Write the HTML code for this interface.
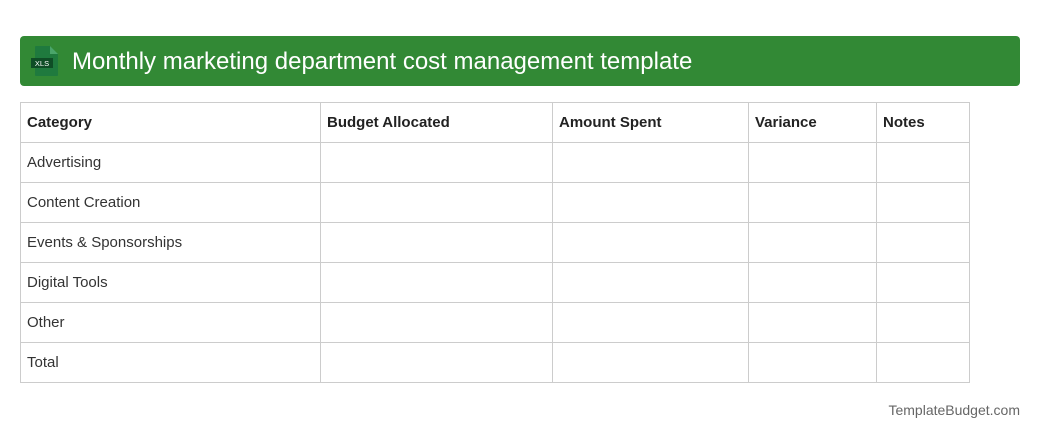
<!DOCTYPE html>
<html><head><style>
body{margin:0;width:1040px;height:440px;background:#fff;font-family:"Liberation Sans",sans-serif;position:relative;overflow:hidden}
.hdr{position:absolute;left:20px;top:36px;width:1000px;height:50px;background:#328935;border-radius:4px}
.hdr h1{position:absolute;left:52px;top:0;margin:0;line-height:51px;font-size:24px;font-weight:normal;color:#fff}
table{position:absolute;left:20px;top:102px;border-collapse:collapse;font-size:15px;color:#333}
td{border:1px solid #ccc;height:39px;padding:0 0 0 6px;vertical-align:middle}
th{border:1px solid #ccc;height:39px;padding:0 0 0 6px;text-align:left;font-weight:bold;color:#222}
.ft{position:absolute;right:20px;top:402px;font-size:14px;color:#666}
</style></head><body>
<div class="hdr">
<svg style="position:absolute;left:10px;top:9px" width="30" height="32" viewBox="0 0 30 32">
<path d="M6 1h14l8 8v21a1 1 0 0 1-1 1H6a1 1 0 0 1-1-1V2a1 1 0 0 1 1-1z" fill="#1f7a3e"/>
<path d="M20 1v8h8z" fill="#4aa56a"/>
<rect x="1" y="13" width="22" height="10" fill="#0f4d26"/>
<text x="12" y="21" font-size="7.5" fill="#fff" text-anchor="middle" font-family="Liberation Sans">XLS</text>
</svg>
<h1>Monthly marketing department cost management template</h1>
</div>
<table>
<tr><th style="width:293px">Category</th><th style="width:225px">Budget Allocated</th><th style="width:189px">Amount Spent</th><th style="width:121px">Variance</th><th style="width:86px">Notes</th></tr>
<tr><td>Advertising</td><td></td><td></td><td></td><td></td></tr>
<tr><td>Content Creation</td><td></td><td></td><td></td><td></td></tr>
<tr><td>Events &amp; Sponsorships</td><td></td><td></td><td></td><td></td></tr>
<tr><td>Digital Tools</td><td></td><td></td><td></td><td></td></tr>
<tr><td>Other</td><td></td><td></td><td></td><td></td></tr>
<tr><td>Total</td><td></td><td></td><td></td><td></td></tr>
</table>
<div class="ft">TemplateBudget.com</div>
</body></html>
